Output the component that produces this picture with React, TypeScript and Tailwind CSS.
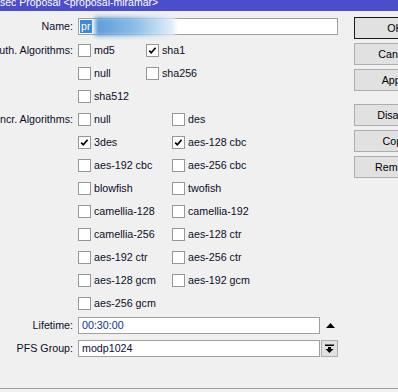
import React from "react";

const FONT = { fontFamily: '"Liberation Sans", Arial, sans-serif' };

function Check({ checked }: { checked?: boolean }) {
  return (
    <div className="w-[13px] h-[13px] border border-[#979797] bg-white flex items-center justify-center shrink-0">
      {checked && (
        <svg width="11" height="11" viewBox="0 0 11 11">
          <path d="M2.2 5.6 L4.3 7.8 L8.6 2.8" stroke="#000" strokeWidth="1.7" fill="none" />
        </svg>
      )}
    </div>
  );
}

function CB({ label, checked }: { label: string; checked?: boolean }) {
  return (
    <div className="h-[23px] flex items-center gap-[3px]">
      <Check checked={checked} />
      <span className="whitespace-nowrap">{label}</span>
    </div>
  );
}

function Label({ text }: { text: string }) {
  return (
    <div className="w-[73px] h-[17px] flex items-center justify-end whitespace-nowrap shrink-0">
      <span className="whitespace-nowrap">{text}</span>
    </div>
  );
}

function Btn({ text, def }: { text: string; def?: boolean }) {
  return (
    <div
      className={
        "w-[82px] h-[22px] bg-[#e1e1e1] border flex items-center justify-center text-black " +
        (def ? "border-[#1a1a1a]" : "border-[#adadad]")
      }
    >
      {text}
    </div>
  );
}

export default function App() {
  const auth: [string, boolean][] = [
    ["md5", false],
    ["sha1", true],
    ["null", false],
    ["sha256", false],
    ["sha512", false],
  ];
  const encr: [string, boolean][] = [
    ["null", false],
    ["des", false],
    ["3des", true],
    ["aes-128 cbc", true],
    ["aes-192 cbc", false],
    ["aes-256 cbc", false],
    ["blowfish", false],
    ["twofish", false],
    ["camellia-128", false],
    ["camellia-192", false],
    ["camellia-256", false],
    ["aes-128 ctr", false],
    ["aes-192 ctr", false],
    ["aes-256 ctr", false],
    ["aes-128 gcm", false],
    ["aes-192 gcm", false],
    ["aes-256 gcm", false],
  ];
  return (
    <div
      className="w-[398px] h-[392px] overflow-hidden bg-[#f0f0f0] flex flex-col text-[10.7px] text-[#0d0d28]"
      style={FONT}
    >
      <div className="h-[11px] bg-[#4b4ecb] overflow-hidden shrink-0">
        <div className="text-white text-[10.5px] leading-[11px] -mt-[3px] whitespace-nowrap">
          sec Proposal &lt;proposal-miramar&gt;
        </div>
      </div>
      <div className="h-[377px] flex shrink-0">
        <div className="w-[354px] shrink-0 pt-[7px] flex flex-col">
          {/* Name */}
          <div className="h-[17px] flex items-center">
            <Label text="Name:" />
            <div className="ml-[5px] w-[260px] h-[17px] border border-[#a0a0a0] bg-white relative flex items-center">
              <span className="ml-[1px] bg-[#3d8ad8] text-white h-[13px] leading-[13px] px-[1px]">pr</span>
              <div className="absolute left-[16px] top-[-2px] w-[80px] h-[19px] bg-gradient-to-r from-[#5d9bd8] via-[#8cbde8] to-[#e8f1fa] blur-[2px]" />
            </div>
          </div>
          {/* Auth */}
          <div className="mt-[4px] flex">
            <div className="w-[73px] h-[23px] flex items-center justify-end shrink-0">
              <span className="whitespace-nowrap">Auth. Algorithms:</span>
            </div>
            <div className="ml-[5px] grid grid-cols-[68px_auto]">
              {auth.map(([l, c], i) => (
                <CB key={i} label={l} checked={c} />
              ))}
            </div>
          </div>
          {/* Encr */}
          <div className="flex">
            <div className="w-[73px] h-[23px] flex items-center justify-end shrink-0">
              <span className="whitespace-nowrap">Encr. Algorithms:</span>
            </div>
            <div className="ml-[5px] grid grid-cols-[94px_auto]">
              {encr.map(([l, c], i) => (
                <CB key={i} label={l} checked={c} />
              ))}
            </div>
          </div>
          {/* Lifetime */}
          <div className="mt-[2px] h-[17px] flex items-center">
            <Label text="Lifetime:" />
            <div className="ml-[5px] w-[242px] h-[17px] border border-[#a0a0a0] bg-white flex items-center pl-[3px] text-[#0b2f8c]">
              00:30:00
            </div>
            <svg className="ml-[6px]" width="9" height="5" viewBox="0 0 9 5">
              <path d="M0 5 L4.5 0 L9 5 Z" fill="#000" />
            </svg>
          </div>
          {/* PFS */}
          <div className="mt-[6px] h-[17px] flex items-center">
            <Label text="PFS Group:" />
            <div className="ml-[5px] w-[242px] h-[17px] border border-[#a0a0a0] bg-white flex items-center pl-[3px] text-[#0d0d3a]">
              modp1024
            </div>
            <div className="ml-[1px] w-[17px] h-[17px] border border-[#adadad] bg-[#e1e1e1] flex items-center justify-center">
              <svg width="9" height="9" viewBox="0 0 9 9">
                <rect x="0" y="0.5" width="9" height="1.5" fill="#000" />
                <rect x="3" y="3" width="3" height="2" fill="#000" />
                <path d="M0.5 5 L8.5 5 L4.5 9 Z" fill="#000" />
              </svg>
            </div>
          </div>
        </div>
        <div className="pt-[6px] flex flex-col gap-[4px] shrink-0">
          <Btn text="OK" def />
          <Btn text="Cancel" />
          <Btn text="Apply" />
          <div className="h-[5px]" />
          <Btn text="Disable" />
          <Btn text="Copy" />
          <Btn text="Remove" />
        </div>
      </div>
      <div className="h-[1px] bg-[#a0a0a0] shrink-0" />
      <div className="h-[3px] bg-[#f0f0f0] shrink-0" />
    </div>
  );
}
